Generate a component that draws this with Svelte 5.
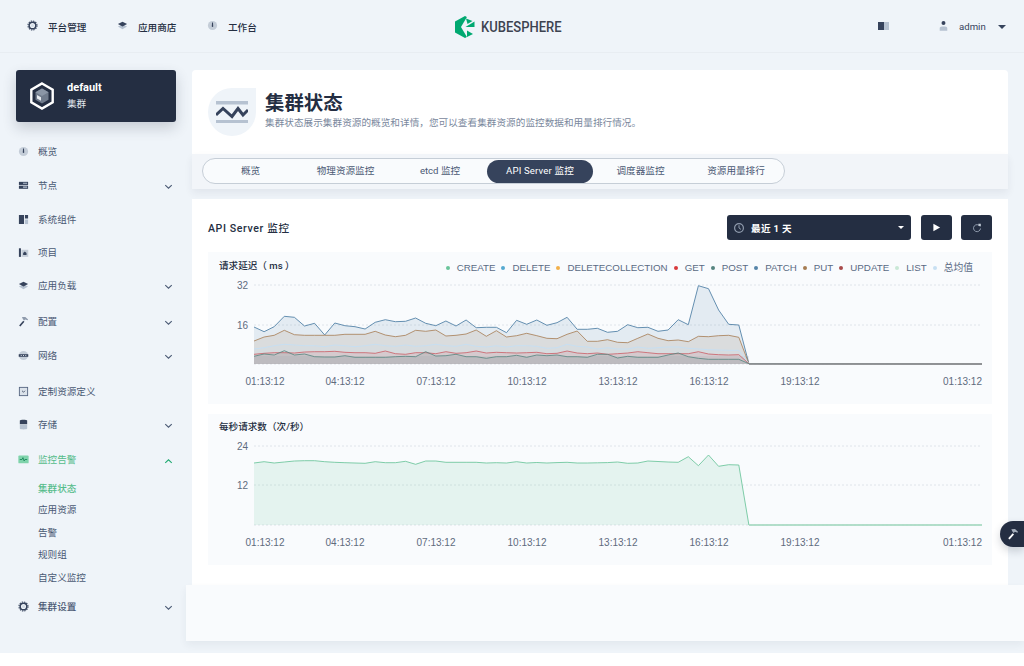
<script>
  const top = [
    { label: '平台管理', icon: 'gear' },
    { label: '应用商店', icon: 'layers' },
    { label: '工作台', icon: 'dash' }
  ];
  const menu = [
    { label: '概览', icon: 'dash', h: 34 },
    { label: '节点', icon: 'nodes', h: 34, arrow: 'down' },
    { label: '系统组件', icon: 'comp', h: 33 },
    { label: '项目', icon: 'project', h: 33 },
    { label: '应用负载', icon: 'layers', h: 36, arrow: 'down' },
    { label: '配置', icon: 'hammer', h: 34, arrow: 'down' },
    { label: '网络', icon: 'net', h: 36, arrow: 'down' },
    { label: '定制资源定义', icon: 'crd', h: 33 },
    { label: '存储', icon: 'store', h: 35, arrow: 'down' },
    { label: '监控告警', icon: 'pulse', h: 29, arrow: 'up', on: true }
  ];
  const subs = [
    { label: '集群状态', h: 21 },
    { label: '应用资源', h: 23 },
    { label: '告警', h: 22 },
    { label: '规则组', h: 23 },
    { label: '自定义监控', h: 29 }
  ];
  const tabs = [
    { label: '概览', w: 95 },
    { label: '物理资源监控', w: 95 },
    { label: 'etcd 监控', w: 94 },
    { label: 'API Server 监控', w: 106, on: true },
    { label: '调度器监控', w: 95 },
    { label: '资源用量排行', w: 96 }
  ];
  const legend = [
    ['CREATE', '#6ac49a'], ['DELETE', '#55a9d0'], ['DELETECOLLECTION', '#f2b04b'], ['GET', '#d8393c'],
    ['POST', '#55847f'], ['PATCH', '#5584a8'], ['PUT', '#a67c52'], ['UPDATE', '#a84a4a'],
    ['LIST', '#c9e8d6'], ['总均值', '#c7dff2']
  ];
  const ticks = [
    ['01:13:12', 265, 'middle'], ['04:13:12', 345, 'middle'], ['07:13:12', 436, 'middle'], ['10:13:12', 527, 'middle'],
    ['13:13:12', 618, 'middle'], ['16:13:12', 709, 'middle'], ['19:13:12', 800, 'middle'], ['01:13:12', 982, 'end']
  ];
  const conv = (vals) => vals.map((v) => 275 + v / 3);
  const series = [
    { c: '#5584a8', o: .9, d: conv([156,170,155,124,127,153,145,180,144,152,155,162,142,134,140,139,129,145,152,138,153,135,158,157,157,173,136,148,135,151,143,127,163,163,160,172,169,149,158,157,169,165,134,149,32,41,105,148,150,266]) },
    { c: '#a67c52', o: .8, d: conv([198,186,181,166,179,181,181,181,181,178,178,178,169,180,185,181,166,169,165,183,181,177,165,184,167,186,182,175,182,190,191,178,168,199,199,194,202,203,190,177,190,197,195,200,184,185,182,181,187,266]) },
    { c: '#c7dff2', o: 1, d: conv([222,218,212,208,210,212,212,215,210,212,215,212,208,212,214,210,214,212,208,212,214,208,214,216,212,216,212,212,214,220,218,208,214,216,222,218,222,222,216,220,218,216,216,220,222,224,225,226,226,266]) },
    { c: '#c9565e', o: .75, d: conv([238,235,233,233,234,231,230,230,229,232,233,233,235,228,236,238,233,233,236,230,235,233,228,234,232,233,234,233,232,236,235,228,234,236,234,238,236,234,230,233,236,236,236,236,230,237,239,240,239,266]) },
    { c: '#55847f', o: .8, d: conv([244,237,240,227,240,237,245,246,246,242,247,247,247,247,245,244,245,230,243,242,238,245,245,250,245,245,241,247,240,242,240,245,245,247,238,238,249,244,247,247,247,240,234,245,250,253,253,253,253,266]) }
  ];
  const greenY = [463,461.7,463,462,461,460.7,460.7,461.7,462.3,462.7,463,463.3,461.7,462.7,462.7,461.3,464.3,461,461,462.3,462.3,462.3,462.3,463,462.7,463,461.7,463,462.5,463,462.6,462.3,463,463,462.8,462.6,462,463.3,463,461,461.5,462,462.3];
  const greenLine = greenY.concat([456.7, 465.7, 455, 466.3, 464.7, 465, 525]);
  const X0 = 254, STEP = 10.1, END = 982;
  const xAt = (i) => X0 + i * STEP;
  const linePts = (ys, base) => ys.map((y, i) => `${xAt(i).toFixed(1)},${y.toFixed(1)}`).join(' ') + ` ${END},${base}`;
  const areaPts = (ys, base) => `${X0},${base} ` + linePts(ys, base) + ` ${X0},${base}`;
</script>

{#snippet icon(name, cls = 'ic')}
  <svg class={cls} viewBox="0 0 12 12" aria-hidden="true">
    {#if name === 'gear'}
      <circle cx="6" cy="6" r="3.6" fill="none" stroke="#36435c" stroke-width="1.6" />
      <circle cx="6" cy="6" r="4.9" fill="none" stroke="#36435c" stroke-width="1.2" stroke-dasharray="1.5 1.07" />
      <circle cx="6" cy="6" r="1.7" fill="#d5dee7" />
    {:else if name === 'layers'}
      <path d="M1 7.2 6 5l5 2.2L6 10z" fill="#b6c2d1" />
      <path d="M1 4.4 6 2l5 2.4L6 7z" fill="#36435c" />
    {:else if name === 'dash'}
      <circle cx="6" cy="6" r="5" fill="#c4cdd8" />
      <path d="M5.5 2.6h1l.3 4.2a.8.8 0 1 1-1.6 0z" fill="#36435c" />
    {:else if name === 'nodes'}
      <path d="M1 2h10v3.4H1z" fill="#36435c" />
      <path d="M1 6.2h10v3.4H1z" fill="#36435c" />
      <path d="M5.5 3h4.5v1.2H5.5zM5.5 7.2h4.5v1.2H5.5z" fill="#b6c2d1" />
    {:else if name === 'comp'}
      <path d="M1 1h5.6v10H1zM7.6 1H11v4H7.6z" fill="#36435c" />
      <path d="M7.6 6H11v5H7.6z" fill="#b6c2d1" />
    {:else if name === 'project'}
      <path d="M1 1.4h2.2v9.4H1z" fill="#36435c" />
      <path d="M3.8 3h7.4v7.8H3.8z" fill="#c4cdd8" />
      <path d="M7.4 4.8 9.3 6.6v2.2H5.6V6.6z" fill="#36435c" />
    {:else if name === 'hammer'}
      <path d="M5.7 5.3 7 6.4 2.6 11.5 1.2 10.3z" fill="#36435c" />
      <path d="M4.3 1.2 8 1l3 2.8-.5.9-2.6-1-1.2 1.3L5.4 3.6z" fill="#8f9bad" />
    {:else if name === 'net'}
      <circle cx="6" cy="6" r="5" fill="#c4cdd8" />
      <path d="M.8 4.6h10.4v2.8H.8z" fill="#36435c" />
      <path d="M3 5.5h1v1H3zM5.5 5.5h1v1h-1zM8 5.5h1v1H8z" fill="#e3e9ef" />
    {:else if name === 'crd'}
      <path d="M1 1h10v10H1z" fill="#5a6a84" />
      <path d="M2 2h8v8H2z" fill="#dbe2ea" />
      <path d="M4.4 5.2 6 6.8l1.6-1.6" fill="none" stroke="#36435c" stroke-width=".9" />
    {:else if name === 'store'}
      <path d="M2 1.6C2 .4 10 .4 10 1.6V5.6H2z" fill="#36435c" />
      <path d="M2 6.4h8v4c0 1.3-8 1.3-8 0z" fill="#b6c2d1" />
    {:else if name === 'pulse'}
      <rect x=".4" y="1.6" width="11.2" height="8.6" rx="1" fill="#7fd3ab" />
      <path d="M2 6h2.4l1-2 1.3 3.6.9-1.6H10" fill="none" stroke="#1e8a5e" stroke-width="1" />
    {/if}
  </svg>
{/snippet}

{#snippet chev(dir)}
  <svg class="chev" class:up={dir === 'up'} viewBox="0 0 10 6" aria-hidden="true">
    <path d={dir === 'up' ? 'M1.4 5 5 1.6 8.6 5' : 'M1.4 1 5 4.4 8.6 1'} fill="none" stroke="currentColor" stroke-width="1.2" />
  </svg>
{/snippet}

<div class="root">
  <header class="topbar">
    <nav class="topnav">
      {#each top as t}
        <a class="topitem">
          {@render icon(t.icon)}
          <span>{t.label}</span>
        </a>
      {/each}
    </nav>
    <div class="logo">
      <svg class="logomark" viewBox="0 0 20 22" aria-hidden="true">
        <path d="M10 0 20 5.5V16.5L10 22 0 16.5V5.5z" fill="#00a971" />
        <path d="M12.5 0 6 11l6.500 11H21V0z" fill="#eff4f9" />
        <path d="M10.500 11 19.500 5.500V11z" fill="#00a971" />
        <path d="M11 2.500 17.500 5 12.500 8z" fill="#00a971" />
        <path d="M12 14.500 18 18 12 21z" fill="#00a971" />
      </svg>
      <span class="logotext">KUBESPHERE</span>
    </div>
    <div class="topright">
      <svg class="layout" viewBox="0 0 11 8" aria-hidden="true">
        <path d="M0 0h6v8H0z" fill="#36435c" /><path d="M6 0h5v8H6z" fill="#b6c2d1" />
      </svg>
      <svg class="user" viewBox="0 0 10 12" aria-hidden="true">
        <circle cx="5" cy="2.6" r="2.2" fill="#36435c" />
        <path d="M.8 11.400V8.200C.8 6 9.200 6 9.200 8.200v3.200z" fill="#b6c2d1" />
      </svg>
      <span class="admin">admin</span>
      <span class="caret"></span>
    </div>
  </header>

  <div class="shell">
    <aside class="side">
      <div class="cluster">
        <svg class="hexa" viewBox="0 0 24 28" aria-hidden="true">
          <path d="M12 1.500 22.700 7.700v12.600L12 26.500 1.300 20.300V7.700z" fill="none" stroke="#fff" stroke-width="2.400" />
          <path d="M12 6.500 18.500 10.200v7.600L12 21.500 5.500 17.800v-7.600z" fill="#707b8c" />
          <path d="M12 6.500 18.500 10.200 12 14 5.500 10.200z" fill="#8b96a6" />
          <path d="M7 13 11 15.200v3.600l-4-2.300z" fill="#e8ecf1" />
        </svg>
        <div class="clusterText">
          <strong>default</strong>
          <span>集群</span>
        </div>
      </div>
      <ul class="menu">
        {#each menu as m}
          <li class="mi" class:on={m.on} style:height="{m.h}px">
            {@render icon(m.icon)}
            <span class="ml">{m.label}</span>
            {#if m.arrow}{@render chev(m.arrow)}{/if}
          </li>
        {/each}
        {#each subs as s, i}
          <li class="si" class:on={i === 0} style:height="{s.h}px">{s.label}</li>
        {/each}
        <li class="mi" style:height="29px">
          {@render icon('gear')}
          <span class="ml strong">集群设置</span>
          {@render chev('down')}
        </li>
      </ul>
    </aside>

    <main class="main">
      <section class="head">
        <div class="badge">
          <svg viewBox="0 0 32 24" aria-hidden="true">
            <path d="M0 1h32v3.400H0zM0 20h32v3H0z" fill="#b6c2d1" />
            <path d="M0 15 7 8.500 16 16.500 22 8.500 27 15 32 10" fill="none" stroke="#36435c" stroke-width="3" />
          </svg>
        </div>
        <div class="headtext">
          <h1>集群状态</h1>
          <p>集群状态展示集群资源的概览和详情，您可以查看集群资源的监控数据和用量排行情况。</p>
        </div>
      </section>

      <div class="band">
        <div class="pill">
          {#each tabs as t}
            <span class="tab" class:on={t.on} style:width="{t.w}px">{t.label}</span>
          {/each}
        </div>
      </div>

      <section class="card">
        <div class="cardhead">
          <h2>API Server 监控</h2>
          <div class="tools">
            <div class="select">
              <svg class="clock" viewBox="0 0 12 12" aria-hidden="true">
                <circle cx="6" cy="6" r="4.400" fill="none" stroke="#8f9bad" stroke-width="1.200" />
                <path d="M6 3.200V6l2 1.400" fill="none" stroke="#8f9bad" stroke-width="1" />
              </svg>
              <span>最近 1 天</span>
              <i class="scaret"></i>
            </div>
            <button class="btn" aria-label="播放">
              <svg viewBox="0 0 10 10" width="9" height="9"><path d="M1.500 .8 9 5 1.500 9.200z" fill="#fff" /></svg>
            </button>
            <button class="btn" aria-label="刷新">
              <svg viewBox="0 0 12 12" width="10" height="10">
                <path d="M9.600 4A4.200 4.200 0 1 0 10.200 6.600" fill="none" stroke="#8f9bad" stroke-width="1.200" />
                <path d="M7.600 .8 10.600 1v3L8 3.600z" fill="#c4cdd8" />
              </svg>
            </button>
          </div>
        </div>

        <div class="panel">
          <div class="phead">
            <h3>请求延迟（ ms ）</h3>
            <ul class="legend">
              {#each legend as [n, c]}
                <li><i style:background={c}></i>{n}</li>
              {/each}
            </ul>
          </div>
          <svg class="plot" viewBox="208 277 784 127">
            {#each [285, 325, 364] as y}
              <line x1={X0} x2={END} y1={y} y2={y} class="grid" />
            {/each}
            <text x="248" y="289" class="ylab">32</text>
            <text x="248" y="329" class="ylab">16</text>
            {#each series as s}
              <polygon points={areaPts(s.d, 364)} fill={s.c} fill-opacity="0.13" stroke="none" />
            {/each}
            <rect x={X0} y="356" width="495" height="8" fill="#9aa0a6" fill-opacity="0.15" />
            {#each series as s}
              <polyline points={linePts(s.d, 364)} fill="none" stroke={s.c} stroke-opacity={s.o} stroke-width="1" />
            {/each}
            <line x1="749" x2={END} y1="364" y2="364" stroke="#8f9396" stroke-width="1.400" />
            {#each ticks as [t, x, a]}
              <text {x} y="385" text-anchor={a} class="xlab">{t}</text>
            {/each}
          </svg>
        </div>

        <div class="panel second">
          <div class="phead">
            <h3>每秒请求数（次/秒）</h3>
          </div>
          <svg class="plot" viewBox="208 437 784 128">
            {#each [446, 485, 525] as y}
              <line x1={X0} x2={END} y1={y} y2={y} class="grid" />
            {/each}
            <text x="248" y="450" class="ylab">24</text>
            <text x="248" y="489" class="ylab">12</text>
            <polygon points={areaPts(greenLine, 525)} fill="#6ac49a" fill-opacity="0.14" />
            <polyline points={linePts(greenLine, 525)} fill="none" stroke="#6ac49a" stroke-opacity=".85" stroke-width="1" />
            <line x1="749" x2={END} y1="525" y2="525" stroke="#b1dcc7" stroke-width="1.400" />
            {#each ticks as [t, x, a]}
              <text {x} y="546" text-anchor={a} class="xlab">{t}</text>
            {/each}
          </svg>
        </div>
      </section>
    </main>
  </div>

  <div class="footer"></div>
  <div class="fab">
    <svg viewBox="0 0 12 12" width="12" height="12" aria-hidden="true">
      <path d="M5.700 5.300 7 6.400 2.600 11.500 1.200 10.300z" fill="#fff" />
      <path d="M4.300 1.200 8 1l3 2.800-.5.900-2.600-1-1.200 1.300L5.400 3.600z" fill="#a6afbc" />
    </svg>
  </div>
</div>

<style>
  :global(body) { margin: 0; background: #fff; }
  .root {
    position: relative;
    height: 653px;
    overflow: hidden;
    background: #eff4f9;
    font-family: Roboto, "Noto Sans CJK SC", sans-serif;
    font-size: 9.6px;
    color: #36435c;
  }
  ul { list-style: none; margin: 0; padding: 0; }
  h1, h2, h3, p { margin: 0; }

  .topbar {
    height: 53px;
    box-sizing: border-box;
    border-bottom: 1px solid #e8edf2;
    display: flex;
    align-items: center;
    padding: 1px 0 0 27px;
    position: relative;
  }
  .topnav { display: flex; }
  .topitem { display: flex; align-items: center; font-weight: 500; color: #242e42; width: 90px; }
  .topitem .ic { margin-right: 10px; margin-top: -2px; }
  .ic { width: 11px; height: 11px; flex: none; }

  .logo {
    position: absolute;
    left: 455px;
    top: 16px;
    display: flex;
    align-items: center;
    height: 22px;
  }
  .logomark { width: 20px; height: 22px; flex: none; }
  .logotext {
    margin-left: 6px;
    font-size: 15.300px;
    font-weight: 500;
    color: #3d4350;
    white-space: nowrap;
    transform: scaleX(.85);
    transform-origin: left center;
  }
  .topright { margin-left: auto; display: flex; align-items: center; padding-right: 18px; }
  .layout { width: 11px; height: 8px; margin-right: 50px; margin-top: -2px; }
  .user { width: 9px; height: 12px; margin-right: 11px; margin-top: -1px; }
  .admin { color: #36435c; margin-right: 11px; width: 28px; }
  .caret { width: 0; height: 0; border: 4px solid transparent; border-top: 4px solid #36435c; border-bottom: 0; }

  .shell { display: flex; }
  .side { width: 176px; margin-left: 16px; flex: none; padding-top: 17px; }
  .cluster {
    height: 52px;
    width: 160px;
    box-sizing: border-box;
    background: #242e42;
    border-radius: 3px;
    box-shadow: 0 6px 14px rgba(36, 46, 66, .2);
    display: flex;
    align-items: center;
    padding-left: 14px;
    color: #fff;
  }
  .hexa { width: 24px; height: 28px; margin-right: 13px; flex: none; }
  .clusterText { display: flex; flex-direction: column; line-height: 16px; }
  .clusterText strong { font-size: 11px; font-weight: 700; }
  .clusterText span { color: #e3e9ef; }

  .menu { margin-top: 22px; width: 160px; }
  .mi { display: flex; align-items: flex-start; padding-left: 2px; color: #4a5974; position: relative; line-height: 16px; }
  .mi .ic { margin-right: 9px; margin-top: 2px; }
  .mi .chev { position: absolute; right: 3px; top: 6px; }
  .mi.on { color: #55bc8a; }
  .strong { font-weight: 500; }
  .chev { width: 9px; height: 6px; color: #4a5974; }
  .chev.up { color: #1fa971; }
  .si { line-height: 16px; padding-left: 22px; color: #4a5974; }
  .si.on { color: #55bc8a; font-weight: 500; }

  .main { width: 816px; padding-top: 17px; flex: none; }
  .head {
    background: #fff;
    height: 84px;
    border-radius: 4px 4px 0 0;
    box-sizing: border-box;
    padding: 18px 16px 0;
    display: flex;
    gap: 9px;
  }
  .badge {
    width: 48px;
    height: 48px;
    border-radius: 50% 0 50% 50%;
    background: #eff4f9;
    display: flex;
    align-items: center;
    justify-content: center;
    flex: none;
  }
  .badge svg { width: 32px; height: 24px; }
  .headtext { padding-top: 2px; }
  h1 { font-size: 19.400px; line-height: 26px; font-weight: 700; color: #242e42; margin-top: 1px; }
  .head p { color: #79879c; line-height: 14px; letter-spacing: .05px; margin-top: -1px; white-space: nowrap; }

  .band {
    height: 35px;
    background: #f2f5f9;
    box-sizing: border-box;
    padding: 4px 10px 0;
    box-shadow: 0 4px 8px rgba(36, 46, 66, .07);
  }
  .pill {
    height: 26px;
    width: 583px;
    box-sizing: border-box;
    background: #f9fbfd;
    border: 1px solid #c6ced7;
    border-radius: 13px;
    display: flex;
    align-items: center;
  }
  .tab { text-align: center; line-height: 22px; padding-bottom: 1px; color: #4a5974; border-radius: 12px; }
  .tab.on { background: #36435c; color: #fff; letter-spacing: .15px; }

  .card { background: #fff; margin-top: 10px; padding: 16px 16px 0; height: 400px; box-sizing: border-box; position: relative; }
  .cardhead { display: flex; align-items: center; justify-content: space-between; height: 25px; margin-bottom: 12px; }
  h2 { font-size: 10.600px; font-weight: 500; letter-spacing: .6px; color: #242e42; }
  .tools { display: flex; gap: 9px; }
  .select {
    width: 184px;
    height: 25px;
    box-sizing: border-box;
    background: #242e42;
    border-radius: 3px;
    color: #fff;
    font-weight: 700;
    letter-spacing: .3px;
    display: flex;
    align-items: center;
    padding-left: 6px;
    position: relative;
    margin-right: 1px;
  }
  .clock { width: 12px; height: 12px; margin-right: 6px; }
  .scaret { position: absolute; right: 7px; top: 11px; border: 3.500px solid transparent; border-top: 3.500px solid #fff; border-bottom: 0; }
  .btn {
    width: 31px;
    height: 25px;
    padding: 0;
    border: 0;
    background: #242e42;
    border-radius: 3px;
    display: flex;
    align-items: center;
    justify-content: center;
  }

  .panel { background: #f9fbfd; height: 152px; }
  .panel.second { margin-top: 10px; height: 151px; }
  .phead { height: 25px; display: flex; align-items: flex-start; padding: 7px 19px 0 11px; box-sizing: border-box; justify-content: space-between; }
  .second .phead { height: 23px; padding-top: 6px; }
  h3 { font-size: 9.600px; line-height: 13px; font-weight: 500; color: #242e42; white-space: nowrap; }
  .legend { display: flex; gap: 6px; padding-top: 2px; font-family: "Liberation Sans", "Noto Sans CJK SC", sans-serif; color: #5a6a84; font-size: 9.750px; line-height: 13px; }
  .legend li { display: flex; align-items: center; white-space: nowrap; }
  .legend i { width: 4px; height: 4px; border-radius: 50%; margin-right: 7px; }
  .plot { display: block; width: 784px; height: 127px; }
  .second .plot { height: 128px; }
  .grid { stroke: #dfe4ea; stroke-width: 1; stroke-dasharray: 2 2; }
  .xlab, .ylab { font-family: "Liberation Sans", sans-serif; font-size: 10px; fill: #5f6b7d; }
  .ylab { text-anchor: end; }

  .footer {
    position: absolute;
    left: 186px;
    right: 0;
    top: 585px;
    height: 56px;
    background: #f9fbfd;
    box-shadow: 0 4px 8px rgba(36, 46, 66, .06);
  }
  .fab {
    position: absolute;
    left: 1000px;
    top: 521px;
    width: 24px;
    height: 26px;
    background: #242e42;
    border-radius: 13px 0 0 13px;
    box-shadow: 0 4px 8px rgba(36, 46, 66, .2);
    display: flex;
    align-items: center;
    padding-left: 7px;
    box-sizing: border-box;
  }
</style>
